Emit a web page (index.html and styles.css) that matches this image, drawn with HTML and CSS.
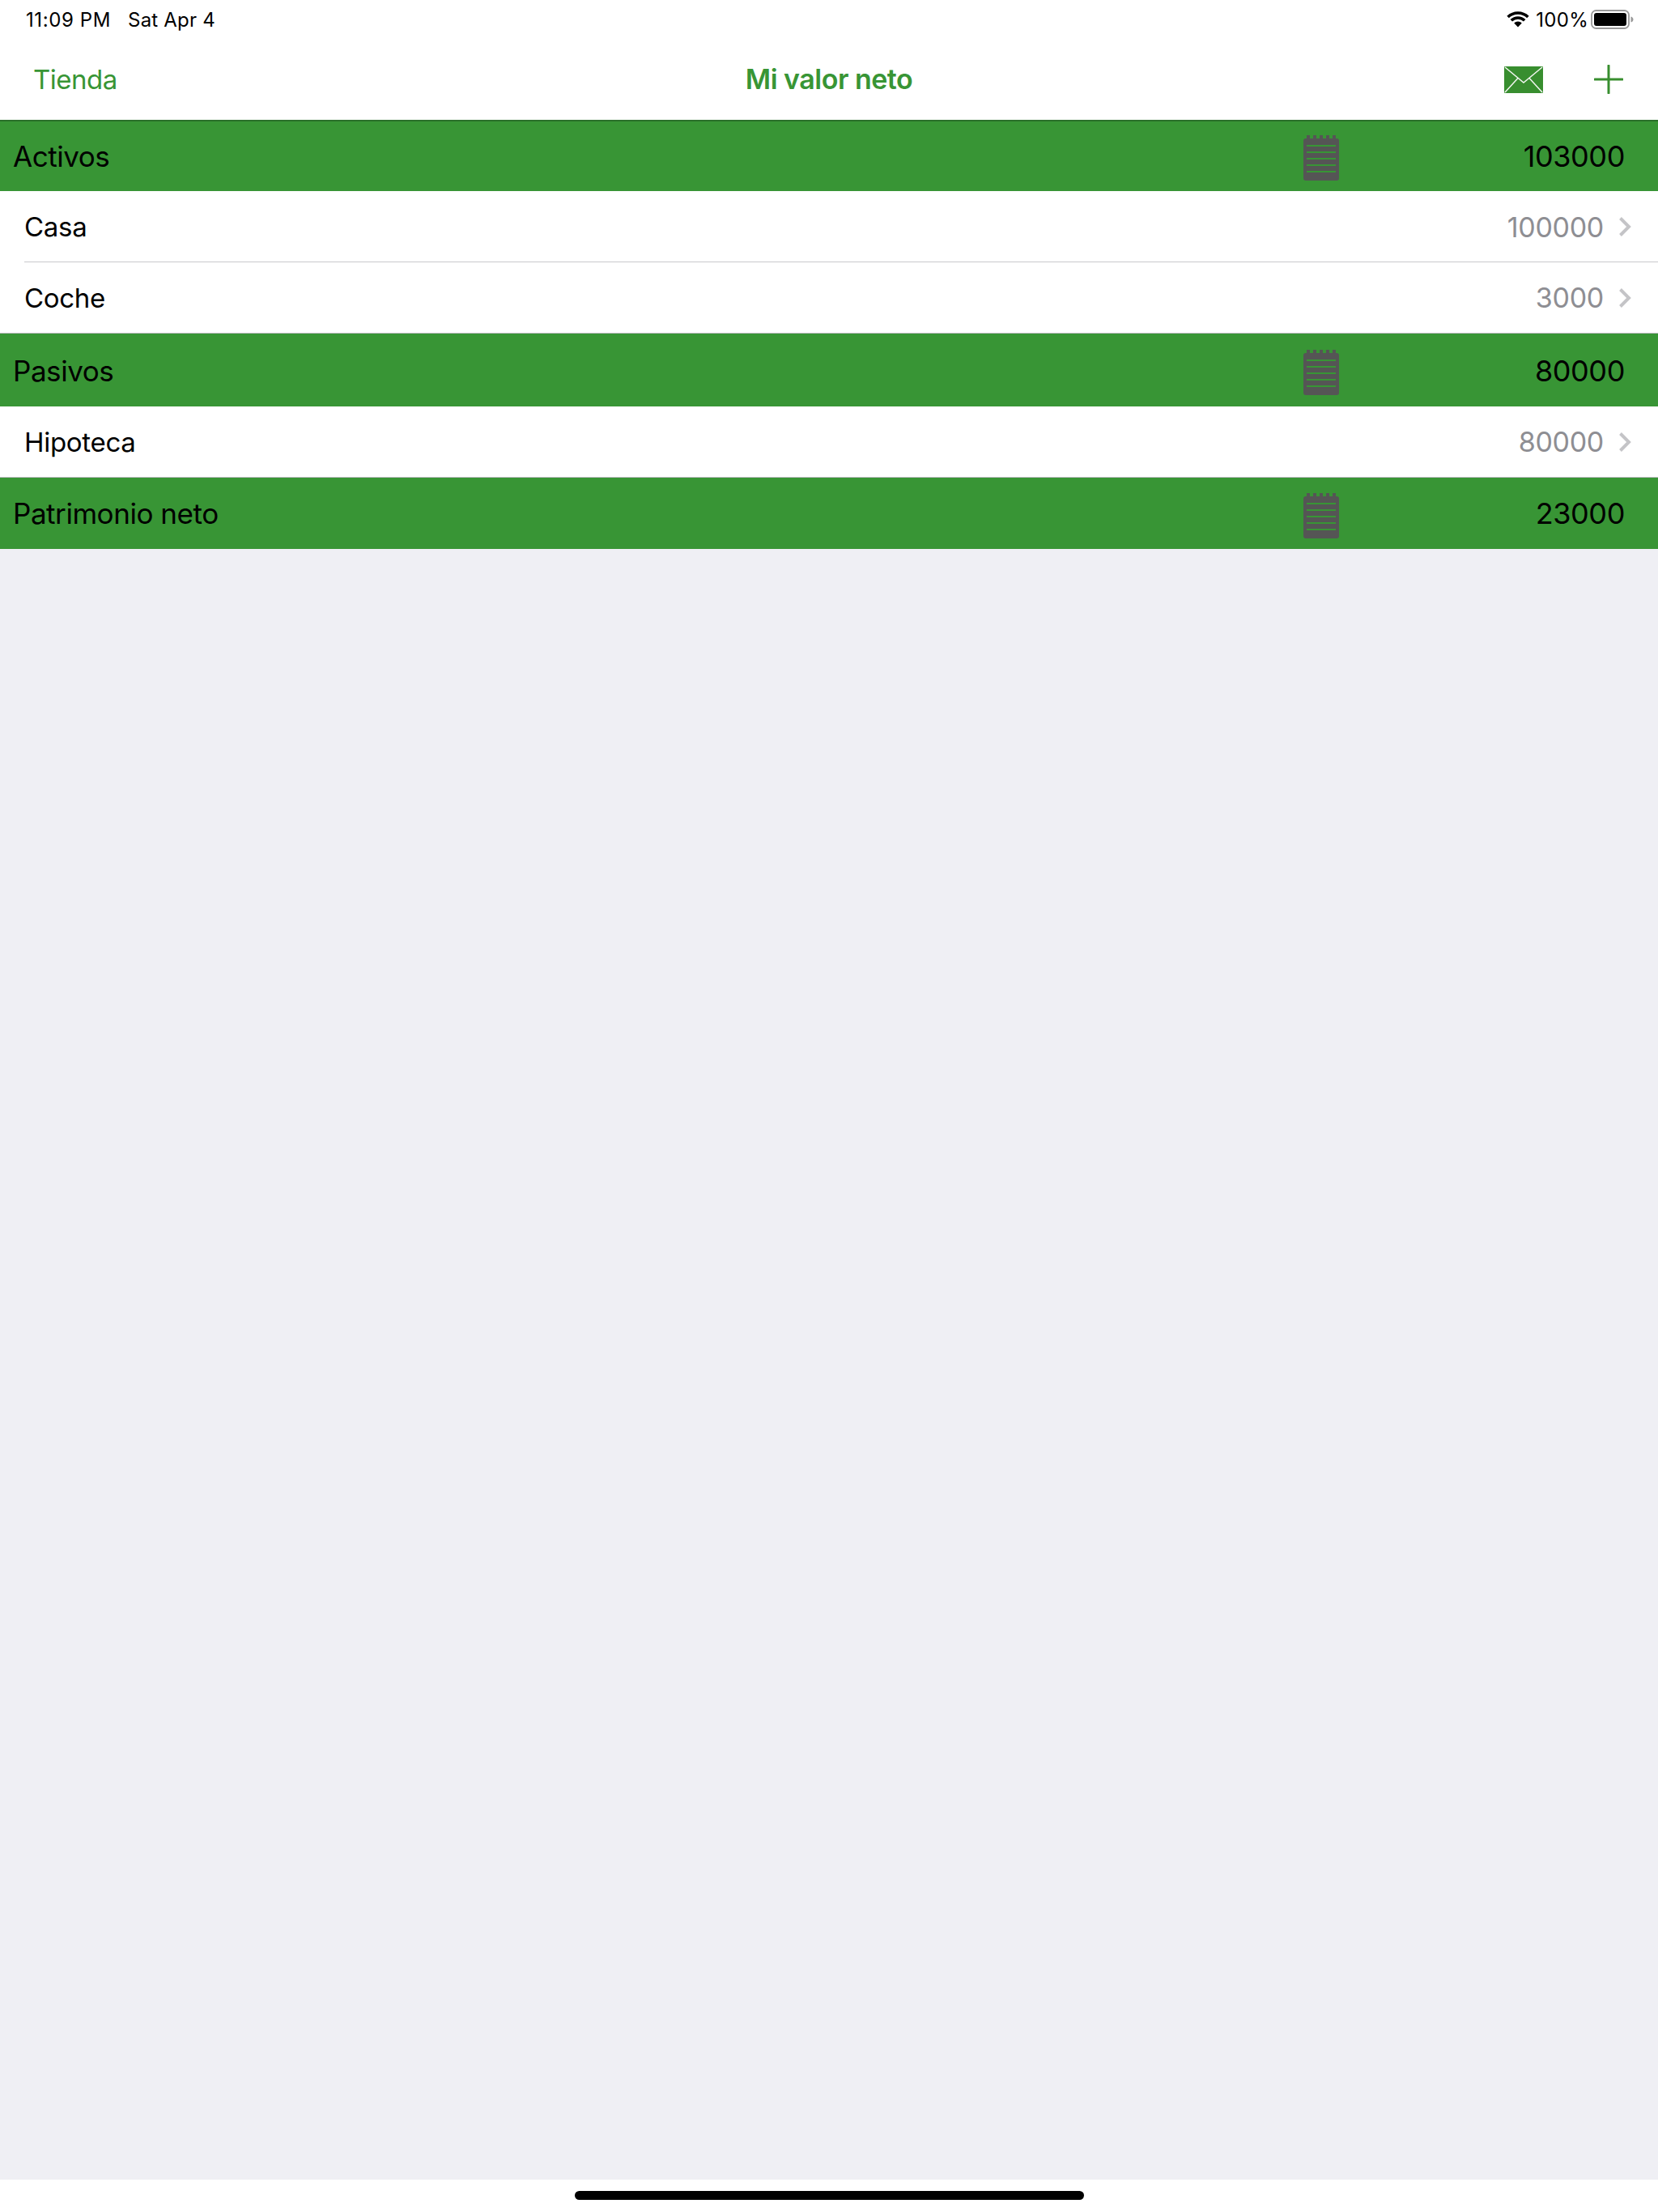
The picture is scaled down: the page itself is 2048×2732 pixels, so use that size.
FILE: index.html
```html
<!DOCTYPE html>
<html lang="es">
<head>
<meta charset="utf-8">
<title>Mi valor neto</title>
<link rel="stylesheet" href="styles.css">
</head>
<body>
<div class="app">
  <header class="top">
    <div class="status">
      <div class="status-left"><span class="time">11:09 PM</span><span class="date">Sat Apr 4</span></div>
      <div class="status-right">
        <svg class="wifi" width="28" height="20" viewBox="0 0 28 20"><path d="M14 19.500 9.200 14.400a6.800 6.800 0 0 1 9.600 0Z" fill="#000"/><path d="M5.800 11.300a11.800 11.800 0 0 1 16.400 0M1.600 7a17.800 17.800 0 0 1 24.800 0" fill="none" stroke="#000" stroke-width="3.600"/></svg>
        <span class="pct">100%</span>
        <svg class="battery" width="54" height="24" viewBox="0 0 54 24"><rect x="1" y="1" width="46" height="22" rx="5.500" fill="none" stroke="#999" stroke-width="1.800"/><rect x="4" y="4" width="40" height="16" rx="3" fill="#000"/><path d="M49.500 8.500c2 .5 3 2 3 3.500s-1 3-3 3.500Z" fill="#999"/></svg>
      </div>
    </div>
    <nav class="nav">
      <span class="nav-link">Tienda</span>
      <span class="nav-title">Mi valor neto</span>
      <div class="nav-actions">
        <svg width="48" height="33" viewBox="0 0 48 33"><path d="M1 0h46a1 1 0 0 1 1 1v31a1 1 0 0 1-1 1H1a1 1 0 0 1-1-1V1a1 1 0 0 1 1-1Z" fill="#388e2f"/><path d="M1 1 24 20 47 1M1 32 17 14.500M47 32 31 14.500" fill="none" stroke="#f2f6f0" stroke-width="1.500"/></svg>
        <svg width="36" height="36" viewBox="0 0 36 36"><path d="M18 1v34M1 18h34" fill="none" stroke="#388e2f" stroke-width="3" stroke-linecap="round"/></svg>
      </div>
    </nav>
  </header>
  <main class="list">
    <section class="head head-a">
      <span class="name">Activos</span>
      <svg class="note" width="44" height="56" viewBox="0 0 44 56"><use href="#notepad"/></svg>
      <span class="total">103000</span>
    </section>
    <div class="row row-first"><div class="row-in row-rule"><span class="name">Casa</span><span class="value">100000</span><svg class="chev" width="16" height="26" viewBox="0 0 16 26"><path d="M2.500 2.500 13 13 2.500 23.500" fill="none" stroke="#c4c4c7" stroke-width="4"/></svg></div></div>
    <div class="row"><div class="row-in"><span class="name">Coche</span><span class="value">3000</span><svg class="chev" width="16" height="26" viewBox="0 0 16 26"><path d="M2.500 2.500 13 13 2.500 23.500" fill="none" stroke="#c4c4c7" stroke-width="4"/></svg></div></div>
    <section class="head head-b">
      <span class="name">Pasivos</span>
      <svg class="note" width="44" height="56" viewBox="0 0 44 56"><use href="#notepad"/></svg>
      <span class="total">80000</span>
    </section>
    <div class="row"><div class="row-in"><span class="name">Hipoteca</span><span class="value">80000</span><svg class="chev" width="16" height="26" viewBox="0 0 16 26"><path d="M2.500 2.500 13 13 2.500 23.500" fill="none" stroke="#c4c4c7" stroke-width="4"/></svg></div></div>
    <section class="head head-c">
      <span class="name">Patrimonio neto</span>
      <svg class="note" width="44" height="56" viewBox="0 0 44 56"><use href="#notepad"/></svg>
      <span class="total">23000</span>
    </section>
  </main>
  <div class="home"><div class="home-bar"></div></div>
</div>
<svg class="defs" width="0" height="0">
  <defs>
    <g id="notepad">
      <path d="M4 0h4v5H4ZM12 0h4v5h-4ZM20 0h4v5h-4ZM28 0h4v5h-4ZM36 0h4v5h-4Z" fill="#555"/>
      <rect x="0" y="4" width="44" height="52" rx="3" fill="#555"/>
      <path d="M4 12h36v2H4ZM4 20h36v2H4ZM4 28h36v2H4ZM4 36h36v2H4ZM4 44h36v2H4Z" fill="#389535"/>
    </g>
  </defs>
</svg>
</body>
</html>
```

FILE: styles.css
```css
html, body {
  margin: 0;
  padding: 0;
}
body {
  font-family: Inter, "Liberation Sans", sans-serif;
  background: #fff;
  color: #000;
}
.app {
  width: 2048px;
  height: 2732px;
  display: flex;
  flex-direction: column;
  overflow: hidden;
}
.top {
  height: 148px;
  flex: none;
  background: #fff;
}
.status {
  height: 48px;
  padding: 0 29px 0 32px;
  display: flex;
  justify-content: space-between;
  align-items: center;
  font-size: 24px;
}
.status-left {
  display: flex;
  gap: 21px;
}
.time {
  letter-spacing: 0.6px;
}
.date {
  letter-spacing: 0.2px;
}
.pct {
  letter-spacing: 0.3px;
}
.status-right {
  display: flex;
  align-items: center;
  gap: 3px;
}
.wifi {
  margin-right: 5px;
}
.nav {
  height: 100px;
  position: relative;
  display: flex;
  align-items: center;
  justify-content: space-between;
  padding: 0 43px 0 41px;
  box-sizing: border-box;
  font-size: 34px;
  color: #389535;
}
.nav-link {
  font-size: 33px;
  letter-spacing: -0.5px;
}
.nav-title {
  position: absolute;
  left: 0;
  right: 0;
  text-align: center;
  font-weight: 600;
  letter-spacing: -0.5px;
  padding-bottom: 2px;
  pointer-events: none;
}
.nav-actions {
  display: flex;
  align-items: center;
  gap: 63px;
}
.list {
  flex: 1;
  background: #efeff4;
}
.head {
  display: flex;
  align-items: center;
  background: #389535;
  padding: 0 41px 0 16px;
  font-size: 36px;
  box-sizing: border-box;
}
.head-a {
  height: 88px;
  border-top: 2px solid #2a702a;
}
.head-b {
  height: 91px;
  border-top: 1px solid #bcbcc0;
}
.head-c {
  height: 89px;
  border-top: 1px solid #bcbcc0;
}
.head .name {
  flex: 1;
  font-size: 35px;
  letter-spacing: -0.45px;
}
.head-b .name {
  padding-top: 2px;
}
.note {
  flex: none;
  margin: 6px 153px 0 0;
}
.head-a .note {
  margin-top: 4px;
}
.total {
  width: 200px;
  text-align: right;
  letter-spacing: -0.4px;
}
.head-b .total {
  padding-top: 2px;
}
.row {
  background: #fff;
  padding-left: 30px;
}
.row-in {
  height: 87px;
  display: flex;
  align-items: center;
  padding-right: 33px;
  font-size: 33px;
  letter-spacing: -0.3px;
  box-sizing: border-box;
}
.row-first .row-in {
  height: 88px;
  padding-top: 1px;
}
.row-rule {
  border-bottom: 1px solid #c8c8cc;
}
.row .name {
  flex: 1;
}
.value {
  color: #8e8e93;
  font-size: 34px;
}
.chev {
  margin-left: 18px;
}
.home {
  height: 40px;
  flex: none;
  display: flex;
  justify-content: center;
  padding-top: 14px;
  box-sizing: border-box;
  background: #fff;
}
.home-bar {
  width: 629px;
  height: 11px;
  background: #000;
  border-radius: 6px;
}
.defs {
  position: absolute;
}
```
